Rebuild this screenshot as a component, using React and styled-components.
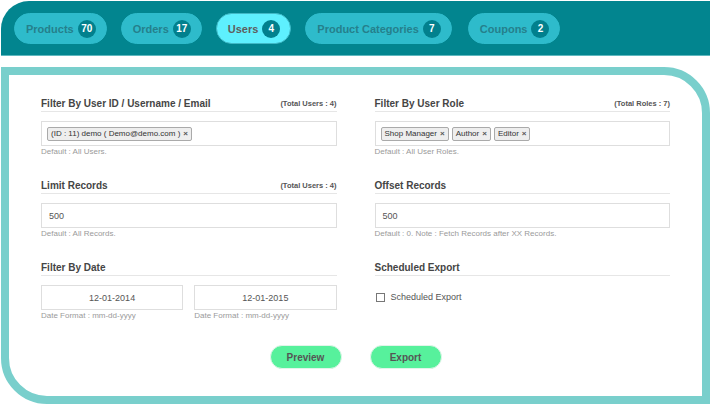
import React from "react";
import styled, { createGlobalStyle } from "styled-components";

const GlobalStyle = createGlobalStyle`
  body {
    margin: 0;
    background: #ffffff;
    font-family: "Liberation Sans", Arial, sans-serif;
  }
`;

const Page = styled.div`
  width: 710px;
  height: 404px;
  overflow: hidden;
  background: #ffffff;
`;

const Header = styled.div`
  height: 55px;
  margin: 1px 0 0 1px;
  background: #02858f;
  border-top-left-radius: 28px;
  border-bottom: 1px solid #5fb8bf;
  box-sizing: border-box;
  padding: 12px 13px 0;
  display: flex;
  gap: 14px;
`;

const Tab = styled.div`
  height: 31px;
  box-sizing: border-box;
  border-radius: 16px;
  padding: 0 10px 0 11px;
  display: flex;
  align-items: center;
  gap: 4px;
  background: ${(p) => (p.$active ? "#5ef0fe" : "#2ebbcb")};
  border: 1px solid ${(p) => (p.$active ? "#3fb9c6" : "#2ebbcb")};
  color: ${(p) => (p.$active ? "#5e5e5e" : "#25808b")};
  font-family: "Liberation Sans", Arial, sans-serif;
  font-size: 11px;
  font-weight: 700;
  margin-left: ${(p) => p.$extra || 0}px;
`;

const Badge = styled.span`
  width: 18px;
  height: 18px;
  flex: none;
  border-radius: 50%;
  background: #02808d;
  color: #ffffff;
  font-size: 10px;
  font-weight: 700;
  display: flex;
  align-items: center;
  justify-content: center;
`;

const Panel = styled.div`
  margin: 11px 0 0 1px;
  height: 337px;
  box-sizing: border-box;
  border: 8px solid #79cfcc;
  border-radius: 0 46px 0 46px;
  padding: 21px 32px 0;
`;

const Grid = styled.div`
  display: grid;
  grid-template-columns: 1fr 1fr;
  column-gap: 38px;
`;

const Field = styled.div`
  height: 82px;
`;

const FieldHead = styled.div`
  display: flex;
  justify-content: space-between;
  align-items: center;
  height: 15px;
  border-bottom: 1px solid #e6e6e6;
  margin-bottom: 9px;
`;

const Title = styled.span`
  font-size: 10px;
  font-weight: 700;
  color: #454545;
`;

const Count = styled.span`
  font-size: 7.5px;
  font-weight: 700;
  color: #555555;
`;

const Box = styled.div`
  height: 25px;
  box-sizing: border-box;
  border: 1px solid #dedede;
  display: flex;
  align-items: center;
  gap: 3px;
  padding: 0 ${(p) => (p.$chips ? 5 : 7)}px;
  justify-content: ${(p) => (p.$center ? "center" : "flex-start")};
  font-size: 9px;
  color: #555555;
`;

const Chip = styled.span`
  height: 14px;
  box-sizing: border-box;
  border: 1px solid #aaaaaa;
  border-radius: 2px;
  background: #eeeeee;
  padding: 0 3px;
  display: inline-flex;
  align-items: center;
  gap: 3px;
  font-size: 8px;
  color: #333333;
`;

const Close = styled.span`
  font-size: 8px;
  color: #555555;
  font-weight: 700;
`;

const Help = styled.div`
  font-size: 8px;
  line-height: 12px;
  color: #9a9a9a;
`;

const DateRow = styled.div`
  display: grid;
  grid-template-columns: 1fr 1fr;
  column-gap: 11px;
`;

const CheckRow = styled.label`
  display: flex;
  align-items: center;
  gap: 6px;
  padding: 7px 0 0 1px;
  font-size: 9px;
  color: #555555;
`;

const CheckBox = styled.span`
  width: 7px;
  height: 7px;
  border: 1px solid #777777;
  background: #ffffff;
`;

const Actions = styled.div`
  display: flex;
  justify-content: center;
  gap: 28px;
  margin-top: 3px;
`;

const Button = styled.button`
  width: 72px;
  height: 24px;
  border: 1px solid #e2f5ea;
  border-radius: 12px;
  background: #57f19c;
  color: #555555;
  font-family: "Liberation Sans", Arial, sans-serif;
  font-size: 10px;
  font-weight: 700;
  padding: 0;
`;

const tabs = [
  { label: "Products", count: 70 },
  { label: "Orders", count: 17 },
  { label: "Users", count: 4, active: true },
  { label: "Product Categories", count: 7 },
  { label: "Coupons", count: 2, extra: 2 },
];

export default function App() {
  return (
    <Page>
      <GlobalStyle />
      <Header>
        {tabs.map((t) => (
          <Tab key={t.label} $active={t.active} $extra={t.extra}>
            {t.label}
            <Badge>{t.count}</Badge>
          </Tab>
        ))}
      </Header>
      <Panel>
        <Grid>
          <Field>
            <FieldHead>
              <Title>Filter By User ID / Username / Email</Title>
              <Count>(Total Users : 4)</Count>
            </FieldHead>
            <Box $chips>
              <Chip>
                (ID : 11) demo ( Demo@demo.com ) <Close>×</Close>
              </Chip>
            </Box>
            <Help>Default : All Users.</Help>
          </Field>
          <Field>
            <FieldHead>
              <Title>Filter By User Role</Title>
              <Count>(Total Roles : 7)</Count>
            </FieldHead>
            <Box $chips>
              <Chip>
                Shop Manager <Close>×</Close>
              </Chip>
              <Chip>
                Author <Close>×</Close>
              </Chip>
              <Chip>
                Editor <Close>×</Close>
              </Chip>
            </Box>
            <Help>Default : All User Roles.</Help>
          </Field>
          <Field>
            <FieldHead>
              <Title>Limit Records</Title>
              <Count>(Total Users : 4)</Count>
            </FieldHead>
            <Box>500</Box>
            <Help>Default : All Records.</Help>
          </Field>
          <Field>
            <FieldHead>
              <Title>Offset Records</Title>
            </FieldHead>
            <Box>500</Box>
            <Help>Default : 0. Note : Fetch Records after XX Records.</Help>
          </Field>
          <Field>
            <FieldHead>
              <Title>Filter By Date</Title>
            </FieldHead>
            <DateRow>
              <div>
                <Box $center>12-01-2014</Box>
                <Help>Date Format : mm-dd-yyyy</Help>
              </div>
              <div>
                <Box $center>12-01-2015</Box>
                <Help>Date Format : mm-dd-yyyy</Help>
              </div>
            </DateRow>
          </Field>
          <Field>
            <FieldHead>
              <Title>Scheduled Export</Title>
            </FieldHead>
            <CheckRow>
              <CheckBox />
              Scheduled Export
            </CheckRow>
          </Field>
        </Grid>
        <Actions>
          <Button>Preview</Button>
          <Button>Export</Button>
        </Actions>
      </Panel>
    </Page>
  );
}
